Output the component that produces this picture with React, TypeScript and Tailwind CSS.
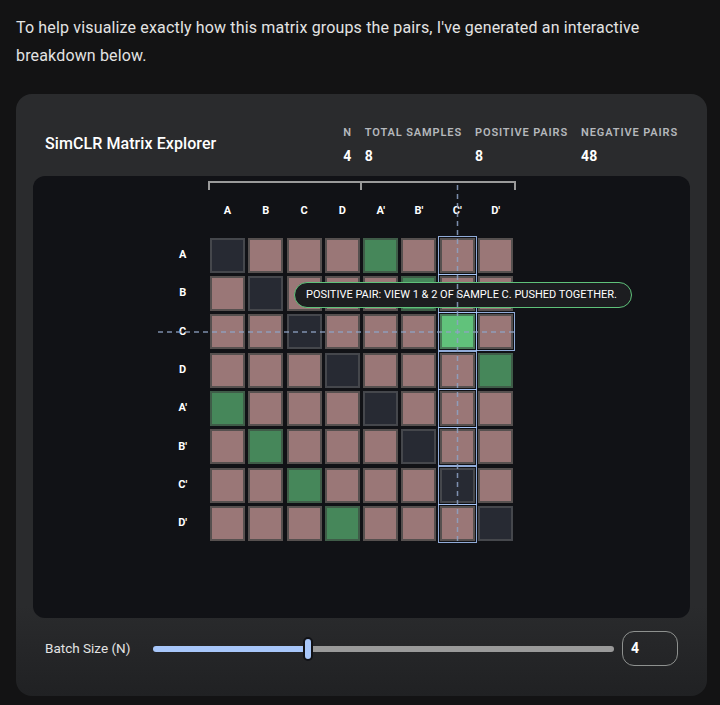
import React from 'react';

const LABELS = ['A', 'B', 'C', 'D', "A'", "B'", "C'", "D'"];
const N = 4;
const HOVER_ROW = 2;
const HOVER_COL = 6;

const Stat = ({ label, value }: { label: string; value: string | number }) => (
  <div className="flex flex-col gap-[5px]">
    <span className="text-[11px] leading-[16px] font-semibold tracking-[0.08em] text-[#b5b8bc]">{label}</span>
    <span className="text-[14px] leading-[20px] font-bold text-white">{value}</span>
  </div>
);

const cellClass = (i: number, j: number) => {
  const size = N * 2;
  let fill = 'bg-[#9a7777] border-[#56504f]';
  if (i === j) fill = 'bg-[#272a33] border-[#45474c]';
  else if (j === (i + N) % size) {
    fill = i === HOVER_ROW && j === HOVER_COL ? 'bg-[#61c27b] border-[#4a7a58]' : 'bg-[#46875a] border-[#3f5c48]';
  }
  const hl = j === HOVER_COL || (i === HOVER_ROW && j > HOVER_COL);
  return `w-[35px] h-[35px] border-2 ${fill} ${hl ? 'outline-[1.5px] outline-solid outline-offset-[1px] outline-[#a8c7fa]/85' : ''}`;
};

export default function App() {
  return (
    <div className="min-h-screen bg-[#131314] pt-[14px] font-['Roboto',sans-serif]">
      <p className="px-4 text-[16px] leading-[28px] tracking-[0.01em] text-[#e3e3e3]">
        To help visualize exactly how this matrix groups the pairs, I've generated an interactive breakdown below.
      </p>

      <div className="ml-4 mt-[24px] w-[691px] rounded-[16px] bg-linear-to-b from-[#2a2b2d] from-85% to-[#202123] px-[17px] pt-[17px] pb-[18px]">
        {/* header */}
        <div className="flex h-[65px] items-center justify-between px-3">
          <h2 className="text-[16px] font-medium tracking-[0.005em] text-white">SimCLR Matrix Explorer</h2>
          <div className="mt-[4px] flex gap-[13px]">
            <Stat label="N" value={N} />
            <Stat label="TOTAL SAMPLES" value={N * 2} />
            <Stat label="POSITIVE PAIRS" value={N * 2} />
            <Stat label="NEGATIVE PAIRS" value={N * 2 * (N * 2 - 2)} />
          </div>
        </div>

        {/* matrix panel */}
        <div className="relative flex h-[442px] flex-col items-center rounded-[12px] bg-[#111216] pt-[5px]">
          <div className="flex h-[9px] w-[308px]">
            <div className="w-[154px] border-t-2 border-l-2 border-r-2 border-[#9a9a9a]" />
            <div className="flex-1 border-t-2 border-r-2 border-[#9a9a9a]" />
          </div>

          <div className="mt-[13px] grid grid-cols-[43.67px_repeat(8,35px)_43.67px] gap-x-[3.33px]">
            <div />
            {LABELS.map((l) => (
              <div key={l} className="h-[16px] text-center text-[11px] leading-[16px] font-bold text-white">{l}</div>
            ))}
            <div />
          </div>

          <div className="mt-[18.7px] grid grid-cols-[43.67px_repeat(8,35px)_43.67px] gap-[3.33px]">
            {LABELS.map((rl, i) => (
              <React.Fragment key={rl}>
                <div className="flex items-center justify-center pr-[4px] text-[11px] font-bold text-white">{rl}</div>
                {LABELS.map((cl, j) => (
                  <div key={cl} className={cellClass(i, j)} />
                ))}
                <div />
              </React.Fragment>
            ))}
          </div>

          {/* tooltip */}
          <div className="absolute left-[261px] top-[106px] flex h-[26px] w-[338px] items-center whitespace-nowrap rounded-full border-[1.5px] border-[#5fc27a] bg-[#1c1d20] px-[11px] text-[11px] text-white">
            POSITIVE PAIR: VIEW 1 &amp; 2 OF SAMPLE C. PUSHED TOGETHER.
          </div>

          {/* crosshair */}
          <svg className="pointer-events-none absolute inset-0 h-full w-full">
            <line x1="424.5" y1="9" x2="424.5" y2="366" stroke="#8ea2c6" strokeOpacity="0.85" strokeWidth="1.5" strokeDasharray="5 4" />
            <line x1="125" y1="155.9" x2="482" y2="155.9" stroke="#8ea2c6" strokeOpacity="0.85" strokeWidth="1.5" strokeDasharray="5 4" />
          </svg>
        </div>

        {/* slider row */}
        <div className="flex items-center px-3 pt-[13px] pb-[12px]">
          <span className="text-[13.5px] text-[#e3e3e3]">Batch Size (N)</span>
          <div className="ml-[23px] flex flex-1 items-center">
            <div className="h-[6px] w-[150px] rounded-l-full bg-[#a8c7fa]" />
            <div className="h-[24px] w-[10px] rounded-full border-2 border-[#111216] bg-[#a8c7fa]" />
            <div className="h-[6px] flex-1 rounded-r-full bg-[#9a9a9a]" />
          </div>
          <div className="ml-2 flex h-[35px] w-[56px] items-center rounded-[12px] border border-[#8e918f] px-2 text-[14px] font-bold text-white">
            4
          </div>
        </div>
      </div>
    </div>
  );
}
